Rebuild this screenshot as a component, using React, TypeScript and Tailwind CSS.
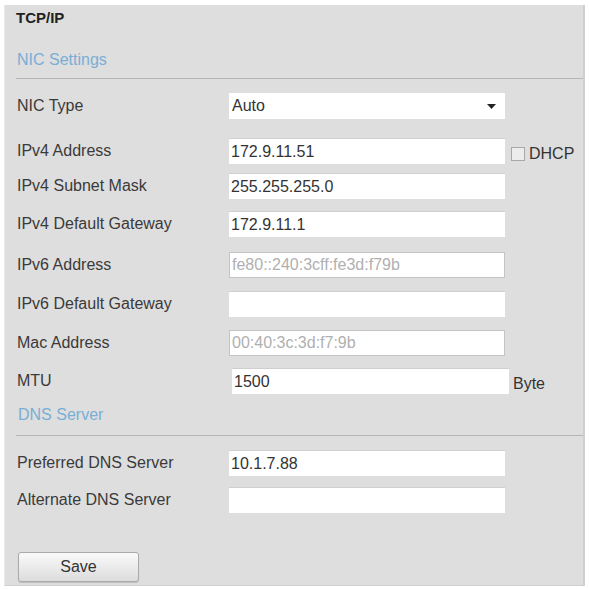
import React from "react";

type Field = {
  label: string;
  value: string;
  top: string;
  disabled?: boolean;
  kind?: "select" | "dhcp" | "mtu";
};

const nicFields: Field[] = [
  { label: "NIC Type", value: "Auto", top: "mt-[14px]", kind: "select" },
  { label: "IPv4 Address", value: "172.9.11.51", top: "mt-[19px]", kind: "dhcp" },
  { label: "IPv4 Subnet Mask", value: "255.255.255.0", top: "mt-[9px]" },
  { label: "IPv4 Default Gateway", value: "172.9.11.1", top: "mt-[12px]" },
  { label: "IPv6 Address", value: "fe80::240:3cff:fe3d:f79b", top: "mt-[15px]", disabled: true },
  { label: "IPv6 Default Gateway", value: "", top: "mt-[13px]" },
  { label: "Mac Address", value: "00:40:3c:3d:f7:9b", top: "mt-[13px]", disabled: true },
  { label: "MTU", value: "1500", top: "mt-[12px]", kind: "mtu" },
];

const dnsFields: Field[] = [
  { label: "Preferred DNS Server", value: "10.1.7.88", top: "mt-[14px]" },
  { label: "Alternate DNS Server", value: "", top: "mt-[11px]" },
];

function Row({ f }: { f: Field }) {
  return (
    <div className={`flex items-center h-[26px] ${f.top}`}>
      <div className="w-[212px] shrink-0 text-[16px] text-[#3a3a3a]">{f.label}</div>
      {f.kind === "select" ? (
        <div className="flex items-center justify-between w-[276px] h-[26px] bg-white px-[3px] text-[16px] text-[#333]">
          <span>{f.value}</span>
          <svg width="9" height="5" viewBox="0 0 9 5" className="mr-[6px]">
            <path d="M0 0h9L4.5 5z" fill="#222" />
          </svg>
        </div>
      ) : (
        <div
          className={`flex items-center h-[26px] bg-white px-[2px] text-[16px] whitespace-nowrap ${
            f.kind === "mtu" ? "w-[277px] ml-[3px]" : "w-[276px]"
          } ${
            f.disabled
              ? "border border-[#c4c4c4] text-[#b0b0b0]"
              : "border-t border-[#cfcfcf] text-[#333]"
          }`}
        >
          {f.value}
        </div>
      )}
      {f.kind === "dhcp" && (
        <div className="flex items-center ml-[6px] mt-[5px]">
          <span className="w-[14px] h-[14px] border border-[#a8a8a8] bg-[#ececec]" />
          <span className="ml-[4px] text-[16px] text-[#333]">DHCP</span>
        </div>
      )}
      {f.kind === "mtu" && <span className="ml-[4px] mt-[6px] text-[16px] text-[#333]">Byte</span>}
    </div>
  );
}

export default function App() {
  return (
    <div className="w-[589px] h-[589px] bg-white pt-[5px] pl-[4px] pr-[4px] pb-[3px] font-['Liberation_Sans',Arial,sans-serif]">
      <div className="h-full bg-[#dedede] border-l border-[#e9e9e9] border-r-2 border-r-[#cfcfcf] border-b border-b-[#cfcfcf]">
        <div className="pl-[11px] pt-[3px] h-[23px] leading-[20px] text-[15px] font-bold text-[#222]">TCP/IP</div>

        {/* NIC settings */}
        <div className="pl-[12px] mt-[22px] leading-[20px] text-[16px] text-[#79aed6]">NIC Settings</div>
        <div className="ml-[11px] mt-[8px] h-px bg-[#b5b5b5]" />
        <div className="pl-[12px]">
          {nicFields.map((f) => (
            <Row key={f.label} f={f} />
          ))}
        </div>

        {/* DNS */}
        <div className="pl-[13px] mt-[11px] leading-[20px] text-[16px] text-[#79aed6]">DNS Server</div>
        <div className="ml-[11px] mt-[10px] h-px bg-[#b5b5b5]" />
        <div className="pl-[12px]">
          {dnsFields.map((f) => (
            <Row key={f.label} f={f} />
          ))}
        </div>

        <div className="pl-[13px] mt-[39px]">
          <button className="w-[121px] h-[30px] rounded-[3px] border border-[#aaa] bg-gradient-to-b from-[#fafafa] to-[#dcdcdc] text-[16px] text-[#333] shadow-[0_1px_1px_rgba(0,0,0,0.15)]">
            Save
          </button>
        </div>
      </div>
    </div>
  );
}
